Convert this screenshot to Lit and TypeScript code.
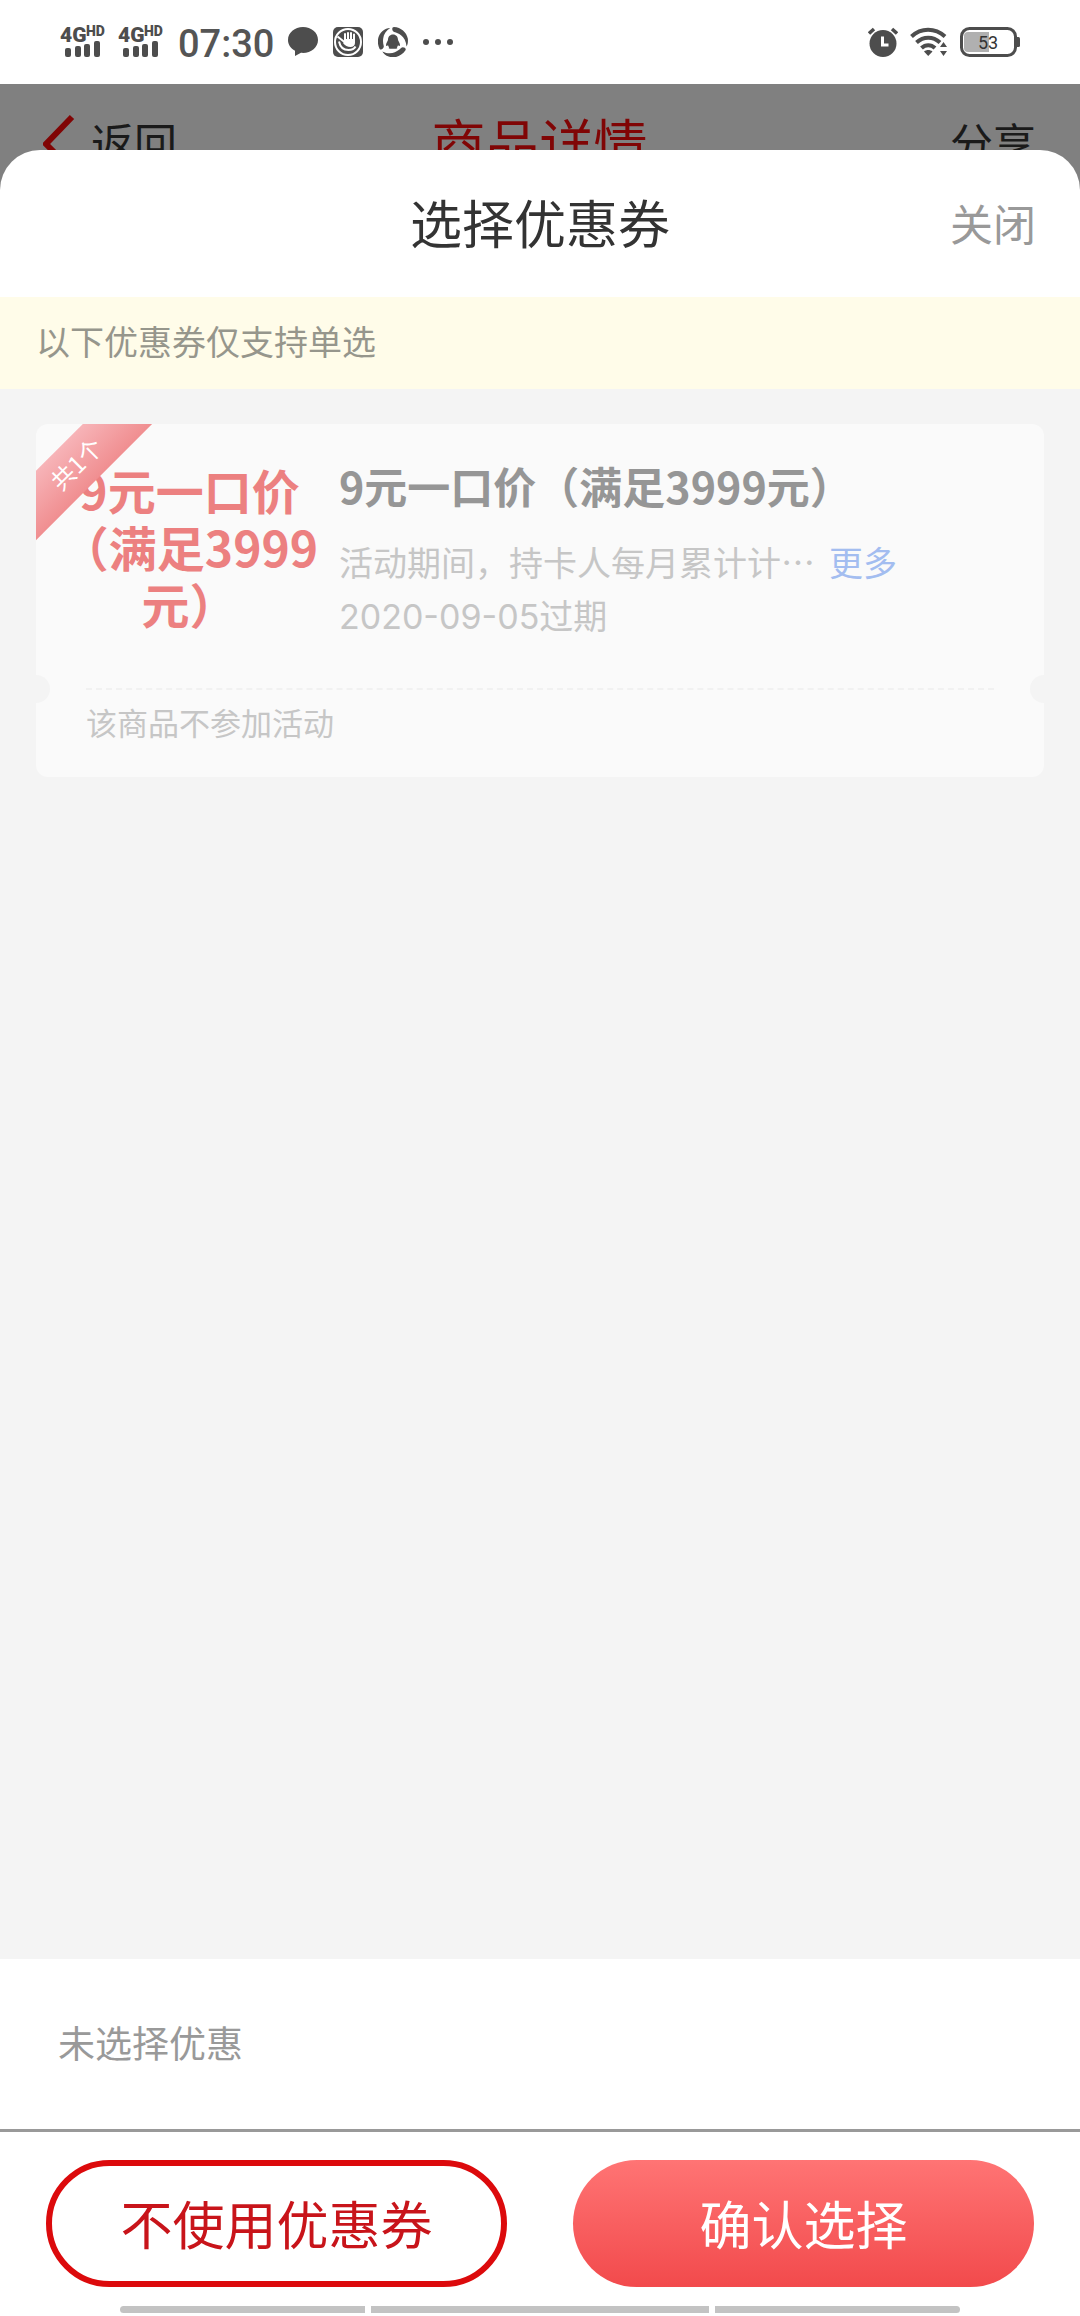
import { LitElement, html, css, svg } from "lit";
import { customElement } from "lit/decorators.js";

const signal = html`<svg class="icon" width="50" height="44" viewBox="-2 -6 50 44" role="img" aria-label="4G HD">
  <g fill="#4d4d4d" font-family="Roboto, 'Liberation Sans', sans-serif" font-weight="900">
    <text x="0" y="16" font-size="21">4G</text>
    <text x="26" y="10" font-size="14">HD</text>
  </g>
  <g fill="#4d4d4d">
    <rect x="5" y="22" width="6" height="9" rx="2" />
    <rect x="15" y="20" width="6" height="11" rx="2" />
    <rect x="24" y="18" width="6" height="13" rx="2" />
    <rect x="34" y="15" width="6" height="16" rx="2" />
  </g>
</svg>`;

const bubble = html`<svg class="icon" width="30" height="30" viewBox="0 0 30 30" aria-hidden="true">
  <path fill="#4d4d4d" d="M15 0C6.700 0 0 5.600 0 13c0 4.500 2.700 8.400 7 10.800V29l6-3.200c.7.1 1.300.1 2 .1 8.300 0 15-5.700 15-13S23.300 0 15 0z" />
</svg>`;

const hand = html`<svg class="icon" width="30" height="30" viewBox="0 0 30 30" aria-hidden="true">
  <rect width="30" height="30" rx="5" fill="#4d4d4d" />
  <circle cx="15" cy="15" r="13" fill="none" stroke="#fff" stroke-width="2" />
  <path fill="none" stroke="#fff" stroke-width="2" d="M4.500 9.500L14 17" />
  <path fill="#fff" d="M11 15V7a1 1 0 0 1 2 0v5h1V6a1 1 0 0 1 2 0v6h1V6a1 1 0 0 1 2 0v6h1V7.500a1 1 0 0 1 2 0V16c0 2.500-2 4-4.500 4-3 0-5.500-1.500-7.500-4z" />
  <path fill="none" stroke="#fff" stroke-width="2" d="M6 14.500c1 5 4.500 8.500 9.500 8.500 3.500 0 6-1.500 7-3.500" />
</svg>`;

const swirl = html`<svg class="icon" width="30" height="30" viewBox="0 0 30 30" aria-hidden="true">
  <g fill="#4d4d4d">
    ${[0, 120, 240].map(
      (a) => svg`<path transform="rotate(${a} 15 15)" d="M16 0c7 .5 12.500 5 13.800 11.500.4 3 0 6-1.300 8-.3-5-2.500-9-5.500-11.200-2.300-1.800-4.500-2.700-6.800-3.300-2.400-.7-2.700-5-.2-5z" />`
    )}
    <path d="M15 7.500c-3.200 0-5 2.300-5 5.200 0 1-2 3.300-2 5.300 0 1.200.8 1.200 2 .2.200 1 .7 1.600 1.200 2.100-.9.600-.6 1.500.8 1.500h6c1.400 0 1.700-.9.800-1.500.5-.5 1-1.100 1.200-2.100 1.200 1 2 1 2-.2 0-2-2-4.300-2-5.300 0-2.900-1.800-5.200-5-5.200z" />
  </g>
</svg>`;

const dots = html`<svg class="icon" width="30" height="30" viewBox="0 0 30 30" aria-hidden="true">
  <g fill="#4d4d4d"><circle cx="3" cy="15" r="3" /><circle cx="15" cy="15" r="3" /><circle cx="27" cy="15" r="3" /></g>
</svg>`;

const alarm = html`<svg class="icon" width="30" height="30" viewBox="0 0 30 30" aria-hidden="true">
  <circle cx="15" cy="16.500" r="13.500" fill="#4d4d4d" />
  <path d="M1 6.500L6 2M29 6.500L24 2" stroke="#4d4d4d" stroke-width="3.500" fill="none" />
  <path d="M14.500 9.500v8.500h6" stroke="#fff" stroke-width="3" fill="none" />
</svg>`;

const wifi = html`<svg class="icon" width="38" height="30" viewBox="0 0 38 30" aria-hidden="true">
  <g fill="none" stroke="#4d4d4d" stroke-width="4">
    <path d="M1.500 9.500C11 .5 25 .5 35 9.500" />
    <path d="M6.500 15.500c7-6.500 16.500-6.500 23.500 0" />
    <path d="M11.500 21c4-3.800 9.500-3.800 13.500 0" />
  </g>
  <path fill="#4d4d4d" d="M14 24.500c2.500-2 6-2 8.500 0L18.200 29zM33.500 15l3.500 5h-7zM33.500 29l-3.500-5h7z" />
</svg>`;

const battery = html`<svg class="icon" width="60" height="30" viewBox="0 0 60 30" role="img" aria-label="53%">
  <rect x="1.500" y="1.500" width="54" height="27" rx="8" fill="#fff" stroke="#4d4d4d" stroke-width="3" />
  <path fill="#b0b0b0" d="M8 5h21v20H8a4 4 0 0 1-4-4V9a4 4 0 0 1 4-4z" />
  <path fill="#4d4d4d" d="M57 10h1.500a1.500 1.500 0 0 1 1.500 1.500v7a1.500 1.500 0 0 1-1.500 1.500H57z" />
  <text x="28" y="22" text-anchor="middle" font-family="Roboto, 'Liberation Sans', sans-serif" font-size="18" fill="#333">53</text>
</svg>`;

@customElement("coupon-card")
class CouponCard extends LitElement {
  static styles = css`
    :host {
      display: block;
    }
    .card {
      position: relative;
      overflow: hidden;
      border-radius: 12px;
      background: #fafafa;
      color: #c6c6c6;
    }
    .main {
      display: grid;
      grid-template-columns: 299px 1fr;
      column-gap: 4px;
      padding: 30px 24px 31px 0;
    }
    .amount {
      margin: 0;
      padding: 7px 8px 0 16px;
      font-size: 48px;
      line-height: 57px;
      font-weight: 700;
      text-align: center;
      color: #ec8080;
    }
    .title {
      margin: 0 0 18px;
      font-size: 43px;
      line-height: 62px;
      font-weight: 700;
      color: #969696;
    }
    .line {
      margin: 0;
      display: flex;
      gap: 14px;
      font-size: 34px;
      line-height: 55px;
    }
    .date {
      font-family: Inter, "Noto Sans CJK SC", sans-serif;
    }
    .more {
      color: #a3bdf0;
      text-decoration: none;
    }
    .tear {
      display: flex;
      align-items: center;
      justify-content: space-between;
      margin: 0 -14px;
    }
    .notch {
      width: 28px;
      height: 28px;
      border-radius: 50%;
      background: #f4f4f4;
    }
    .dash {
      flex: 1;
      margin: 0 36px;
      border-top: 2px dashed #f1f1f1;
    }
    .reason {
      margin: 0;
      padding: 0 50px 36px;
      font-size: 31px;
      line-height: 38px;
    }
    .ribbon {
      position: absolute;
      left: -49px;
      top: 16px;
      width: 180px;
      height: 49px;
      line-height: 46px;
      font-size: 24px;
      text-align: center;
      color: #fff;
      background: linear-gradient(#f7b4b8, #f08e90);
      transform: rotate(-45deg);
    }
  `;
  render() {
    return html`<article class="card">
      <div class="main">
        <p class="amount">9元一口价（满足3999元）</p>
        <div>
          <h2 class="title">9元一口价（满足3999元）</h2>
          <p class="line"><span>活动期间，持卡人每月累计计…</span><a class="more" href="#more">更多</a></p>
          <p class="line date">2020-09-05过期</p>
        </div>
      </div>
      <div class="tear"><span class="notch"></span><span class="dash"></span><span class="notch"></span></div>
      <p class="reason">该商品不参加活动</p>
      <span class="ribbon">共1个</span>
    </article>`;
  }
}

@customElement("app-root")
class AppRoot extends LitElement {
  static styles = css`
    :host {
      display: flex;
      flex-direction: column;
      min-height: 100vh;
      background: #fff;
      font-family: "Noto Sans CJK SC", sans-serif;
    }
    button {
      font: inherit;
      border: 0;
      padding: 0;
      background: none;
      color: inherit;
      cursor: pointer;
    }
    .icon {
      display: block;
    }
    .status {
      display: flex;
      align-items: center;
      justify-content: space-between;
      height: 84px;
      padding: 0 60px 0 58px;
    }
    .group {
      display: flex;
      align-items: center;
      gap: 12px;
    }
    .signals {
      display: flex;
      gap: 8px;
    }
    .apps {
      display: flex;
      gap: 15px;
      padding-left: 2px;
    }
    .time {
      padding-top: 4px;
      font: 500 38px/44px Roboto, "Liberation Sans", sans-serif;
      color: #555;
    }
    .nav {
      display: grid;
      grid-template-columns: 1fr auto 1fr;
      align-items: center;
      height: 114px;
      padding: 0 44px 0 43px;
      background: #808080;
      color: #1a1a1a;
      font-size: 43px;
    }
    .back {
      display: flex;
      align-items: center;
      gap: 16px;
    }
    .page-title {
      margin: 0;
      font-size: 54px;
      font-weight: 400;
      color: #800505;
    }
    .end {
      justify-self: end;
    }
    .sheet {
      position: relative;
      flex: 1;
      display: flex;
      flex-direction: column;
      margin-top: -48px;
      border-radius: 40px 40px 0 0;
      background: #fff;
    }
    .head {
      display: grid;
      grid-template-columns: 1fr auto 1fr;
      align-items: center;
      height: 143px;
      padding: 0 44px 4px;
      font-size: 43px;
      color: #999;
    }
    .sheet-title {
      grid-column: 2;
      margin: 0;
      font-size: 52px;
      font-weight: 400;
      color: #333;
    }
    .notice {
      margin: 0;
      padding: 17px 36px 22px;
      font-size: 34px;
      line-height: 53px;
      color: #96968c;
      background: #fffce9;
    }
    .list {
      flex: 1;
      padding: 35px 36px;
      background: #f4f4f4;
    }
    .summary {
      margin: 0;
      padding: 55px 58px 59px;
      font-size: 37px;
      line-height: 56px;
      color: #999;
      border-bottom: 3px solid #999;
    }
    .actions {
      display: grid;
      grid-template-columns: 1fr 1fr;
      gap: 66px;
      padding: 28px 46px 19px;
    }
    .actions button {
      height: 127px;
      padding-bottom: 3px;
      border-radius: 64px;
      font-size: 52px;
    }
    .actions .skip {
      border: 6px solid #dc0a0c;
      color: #c8141a;
    }
    .actions .confirm {
      color: #fff;
      background: linear-gradient(#ff7474, #f24a4c);
    }
    .gesture {
      display: grid;
      grid-template-columns: 245fr 338fr 245fr;
      gap: 6px;
      padding: 0 120px 3px;
    }
    .gesture span {
      height: 7px;
      background: #c3c3c3;
    }
    .gesture span:first-child {
      border-radius: 4px 0 0 4px;
    }
    .gesture span:last-child {
      border-radius: 0 4px 4px 0;
    }
  `;
  render() {
    return html`
      <div class="status">
        <div class="group">
          <div class="signals">${signal}${signal}</div>
          <span class="time">07:30</span>
          <div class="apps">${bubble}${hand}${swirl}${dots}</div>
        </div>
        <div class="group">${alarm}${wifi}${battery}</div>
      </div>
      <header class="nav">
        <button class="back">
          <svg class="icon" width="32" height="60" viewBox="0 0 32 60" aria-hidden="true">
            <path d="M29 6L3 33l26 26" fill="none" stroke="#800505" stroke-width="6" />
          </svg>
          返回
        </button>
        <h1 class="page-title">商品详情</h1>
        <button class="end">分享</button>
      </header>
      <section class="sheet">
        <div class="head">
          <h2 class="sheet-title">选择优惠券</h2>
          <button class="end">关闭</button>
        </div>
        <p class="notice">以下优惠券仅支持单选</p>
        <div class="list"><coupon-card></coupon-card></div>
        <p class="summary">未选择优惠</p>
        <div class="actions">
          <button class="skip">不使用优惠券</button>
          <button class="confirm">确认选择</button>
        </div>
        <div class="gesture"><span></span><span></span><span></span></div>
      </section>
    `;
  }
}
